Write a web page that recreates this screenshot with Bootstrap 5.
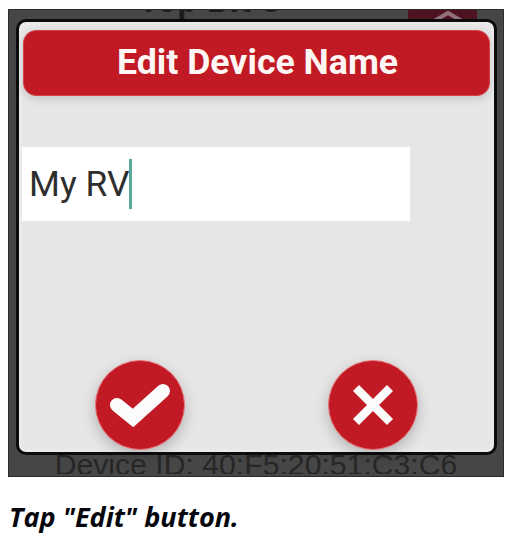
<!DOCTYPE html>
<html lang="en">
<head>
<meta charset="utf-8">
<title>Edit Device Name</title>
<link href="https://cdn.jsdelivr.net/npm/bootstrap@5.3.0/dist/css/bootstrap.min.css" rel="stylesheet">
<style>
html,body{margin:0;padding:0;background:#fff;width:512px;height:546px;overflow:hidden}
.page-wrap{padding:9px 8px 0 8px}
.phone-frame{height:468px;background:#464646;overflow:hidden;outline:1px solid #2c2c2c;outline-offset:-1px}
.peek-top{height:10px;padding-left:130px;padding-right:27px;overflow:hidden}
.peek-top-text{font:700 34px/1 Roboto,sans-serif;color:#1c1c1c;margin-top:-26px;letter-spacing:1px}
.peek-badge{width:69px;height:10px;background:#4e1220;border-radius:3px 3px 0 0;overflow:hidden}
.peek-badge svg{display:block}
.dialog-shell{width:481px;height:436px;margin:0 0 0 8px;background:#e6e6e6;border:3px solid #0c0c0c;border-radius:10px;padding:8px 4px 0 4px;flex:none;box-shadow:inset 0 0 6px rgba(255,255,255,.5)}
.dialog-title{height:66px;background:#c11a24;border-radius:13px;color:#fdf6f4;font:700 35.7px/1 Roboto,sans-serif;box-shadow:0 3px 8px rgba(0,0,0,.14);border:1px solid #d8434a;padding-left:2px}
.name-field{width:388px;height:74px;background:#fff;margin:51px 0 0 -1px;padding:2px 0 0 7px;font:400 35.4px/1 Roboto,sans-serif;color:#2e2e2e}
.caret-bar{display:inline-block;width:3px;height:50px;background:#5aa897;margin:-2px 0 0 0}
.round-row{margin-top:139px;padding-left:72px}
.round-btn{width:90px;height:90px;padding:0;border-radius:50%;background:#c11a24;border:1px solid #e8767a;box-shadow:0 5px 14px rgba(0,0,0,.22)}
.round-btn:hover{background:#c11a24}
.round-gap{width:143px}
.peek-bottom{height:19px;overflow:hidden;text-align:center;font:400 30.2px/1 "Liberation Sans",sans-serif;color:#262626}
.peek-bottom span{display:block;margin-top:-5px}
.caption{margin:24px 0 0 1px;font:italic 700 27.1px/1.2 "Open Sans",sans-serif;color:#05070c}
</style>
</head>
<body>
<div class="page-wrap">
  <div class="phone-frame d-flex flex-column">
    <div class="peek-top d-flex justify-content-between align-items-start flex-none">
      <div class="peek-top-text">Top Bit 3</div>
      <div class="peek-badge">
        <svg width="69" height="10" viewBox="0 0 69 10"><path d="M26 12 L40 4 L54 12" fill="none" stroke="#8f7378" stroke-width="4"/></svg>
      </div>
    </div>
    <div class="dialog-shell">
      <div class="dialog-title d-flex align-items-center justify-content-center">Edit Device Name</div>
      <div class="name-field d-flex align-items-center">My RV<span class="caret-bar"></span></div>
      <div class="round-row d-flex">
        <button type="button" class="btn round-btn d-flex align-items-center justify-content-center" aria-label="Confirm">
          <svg width="62" height="46" viewBox="0 0 62 46"><path d="M8 23 L24 36 L54 9" fill="none" stroke="#fbfbfb" stroke-width="14" stroke-linejoin="miter" stroke-linecap="round"/></svg>
        </button>
        <div class="round-gap"></div>
        <button type="button" class="btn round-btn d-flex align-items-center justify-content-center" aria-label="Cancel">
          <svg width="44" height="44" viewBox="0 0 44 44"><path d="M5 5 L39 39 M39 5 L5 39" fill="none" stroke="#fbfbfb" stroke-width="8.5"/></svg>
        </button>
      </div>
    </div>
    <div class="peek-bottom"><span>Device ID: 40:F5:20:51:C3:C6</span></div>
  </div>
  <div class="caption">Tap "Edit" button.</div>
</div>
</body>
</html>
